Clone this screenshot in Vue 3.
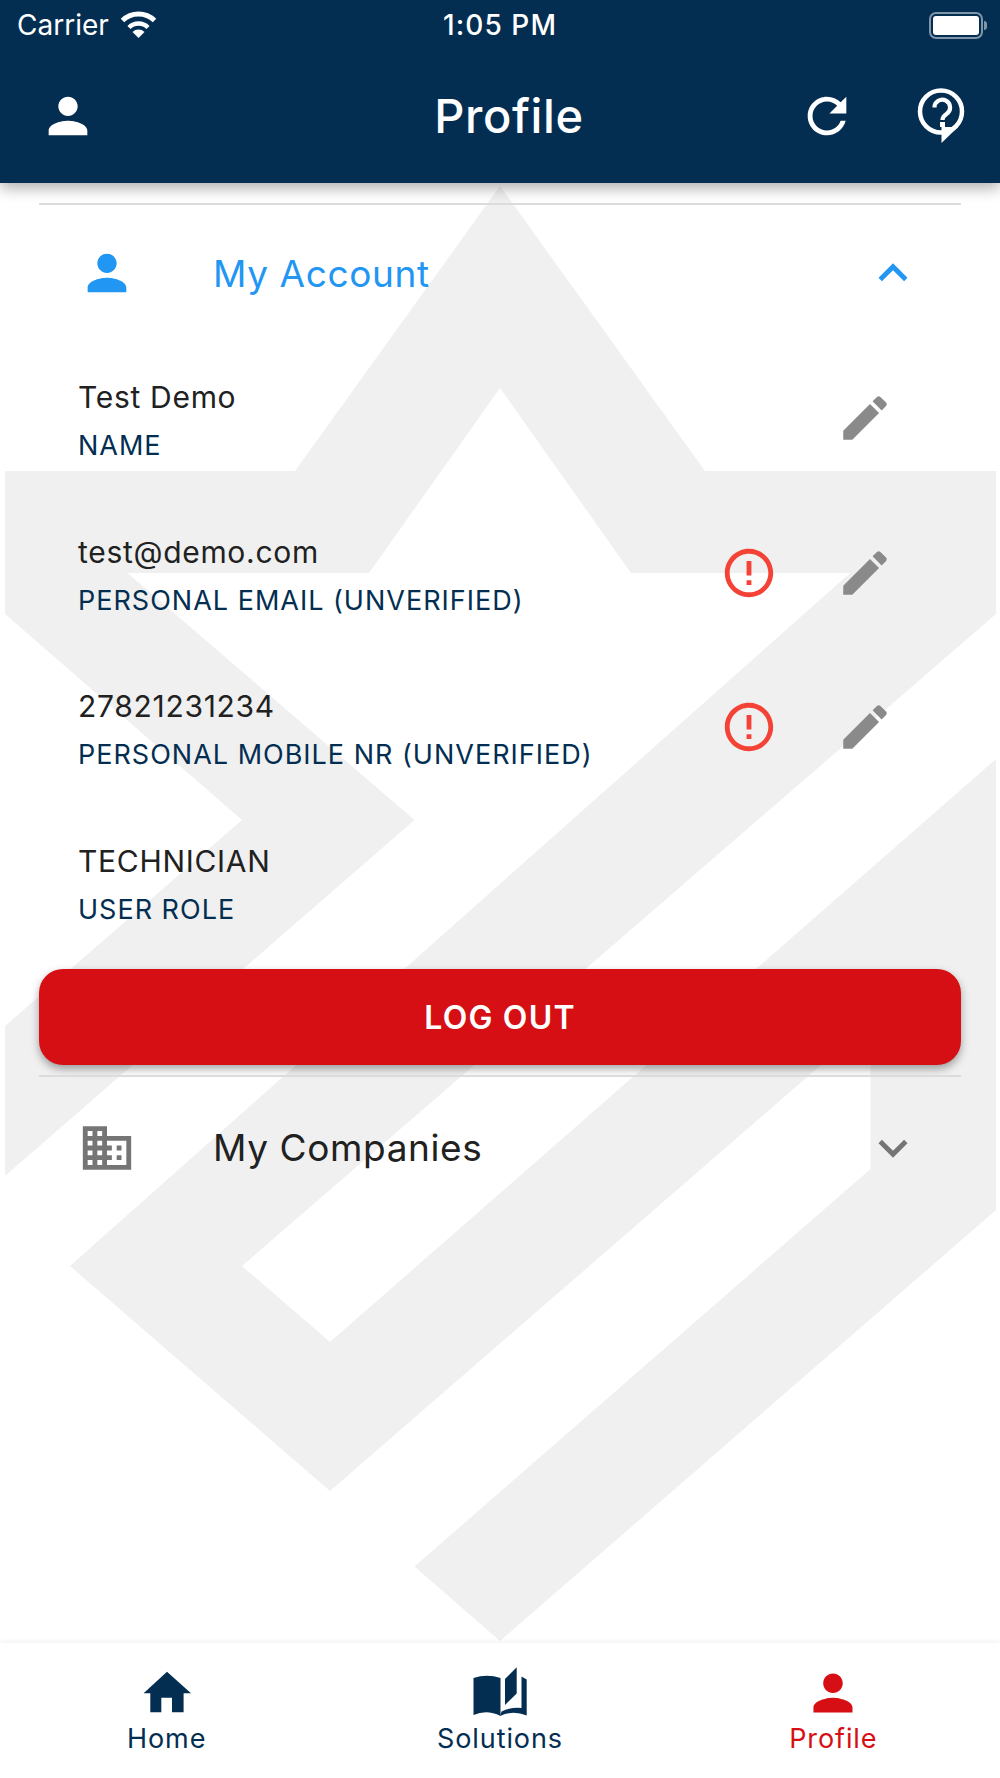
<script setup>
const personPath = 'M12 12c2.21 0 4-1.79 4-4s-1.79-4-4-4-4 1.79-4 4 1.79 4 4 4zm0 2c-2.67 0-8 1.34-8 4v2h16v-2c0-2.66-5.33-4-8-4z'
const editPath = 'M3 17.25V21h3.75L17.81 9.94l-3.75-3.75L3 17.25zM20.71 7.04c.39-.39.39-1.02 0-1.41l-2.34-2.34c-.39-.39-1.02-.39-1.41 0l-1.83 1.83 3.75 3.75 1.83-1.83z'
const errorPath = 'M11 15h2v2h-2zm0-8h2v6h-2zm.99-5C6.47 2 2 6.48 2 12s4.47 10 9.99 10C17.52 22 22 17.52 22 12S17.52 2 11.99 2zM12 20c-4.42 0-8-3.58-8-8s3.58-8 8-8 8 3.58 8 8-3.58 8-8 8z'
const rows = [
  { value: 'Test Demo', label: 'NAME', edit: true, warn: false },
  { value: 'test@demo.com', label: 'PERSONAL EMAIL (UNVERIFIED)', edit: true, warn: true },
  { value: '27821231234', label: 'PERSONAL MOBILE NR (UNVERIFIED)', edit: true, warn: true },
  { value: 'TECHNICIAN', label: 'USER ROLE', edit: false, warn: false }
]
</script>

<template>
  <div class="screen">
    <svg class="watermark" viewBox="0 0 1000 1778" width="1000" height="1778" aria-hidden="true">
      <path d="M500 186 705 471H996V614L242 1266 330 1342 996 759V1210L500 1641 414.500 1566.500 870.500 1169V1022L330 1491 70 1266 850 573H631L500 388 369 573H127.500L414.500 820 5 1176V1026L242 820 5 614V471H295Z" />
    </svg>

    <header class="app-header">
      <div class="status-bar">
        <div class="status-left">
          <span>Carrier</span>
          <svg class="wifi" viewBox="0 0 37 27" width="37" height="27">
            <path d="M2.500 9.500A23 23 0 0 1 34.500 9.500" fill="none" stroke="#fff" stroke-width="5" />
            <path d="M9 16.500A13.500 13.500 0 0 1 28 16.500" fill="none" stroke="#fff" stroke-width="4.500" />
            <path d="M18.500 27 12.500 21A8.500 8.500 0 0 1 24.500 21Z" fill="#fff" />
          </svg>
        </div>
        <span class="clock">1:05 PM</span>
        <div class="battery">
          <div class="battery-body"><div class="battery-level"></div></div>
          <div class="battery-tip"></div>
        </div>
      </div>
      <nav class="nav-bar">
        <div class="nav-left">
          <svg class="icon" viewBox="0 0 24 24"><path :d="personPath" fill="#fff" /></svg>
        </div>
        <h1 class="title">Profile</h1>
        <div class="nav-right">
          <svg class="icon" viewBox="0 0 24 24"><path d="M17.65 6.350C16.200 4.900 14.210 4 12 4c-4.420 0-7.990 3.580-7.990 8s3.570 8 7.990 8c3.730 0 6.840-2.550 7.730-6h-2.080c-.82 2.330-3.040 4-5.650 4-3.310 0-6-2.690-6-6s2.690-6 6-6c1.660 0 3.140.69 4.220 1.780L13 11h7V4l-2.350 2.350z" fill="#fff" /></svg>
          <svg class="icon" viewBox="0 0 58 58">
            <circle cx="29" cy="24.500" r="21" fill="none" stroke="#fff" stroke-width="4.500" />
            <path d="M29.500 40V56L46 40Z" fill="#fff" />
            <path d="M22.500 20.500A7.800 7.800 0 1 1 34.500 27C31.500 29 30.500 30 30.500 33" fill="none" stroke="#fff" stroke-width="4.200" />
            <rect x="28" y="35" width="5" height="5" fill="#fff" />
          </svg>
        </div>
      </nav>
    </header>

    <main class="content">
      <div class="divider"></div>
      <section class="section-head active">
        <svg class="icon" viewBox="0 0 24 24"><path :d="personPath" /></svg>
        <span class="section-title">My Account</span>
        <svg class="icon" viewBox="0 0 24 24"><path d="M12 8l-6 6 1.410 1.410L12 10.830l4.590 4.580L18 14z" /></svg>
      </section>

      <div v-for="row in rows" :key="row.label" class="row">
        <div class="row-text">
          <div class="row-value">{{ row.value }}</div>
          <div class="row-label">{{ row.label }}</div>
        </div>
        <div class="row-icons">
          <svg v-if="row.warn" class="icon" viewBox="0 0 24 24"><path :d="errorPath" fill="#f44336" /></svg>
          <svg v-if="row.edit" class="icon" viewBox="0 0 24 24"><path :d="editPath" fill="#8a8a8a" /></svg>
        </div>
      </div>

      <button class="logout">LOG OUT</button>
      <div class="divider"></div>

      <section class="section-head companies">
        <svg class="icon" viewBox="0 0 24 24"><path d="M12 7V3H2v18h20V7H12zM6 19H4v-2h2v2zm0-4H4v-2h2v2zm0-4H4V9h2v2zm0-4H4V5h2v2zm4 12H8v-2h2v2zm0-4H8v-2h2v2zm0-4H8V9h2v2zm0-4H8V5h2v2zm10 12h-8v-2h2v-2h-2v-2h2v-2h-2V9h8v10zm-2-8h-2v2h2v-2zm0 4h-2v2h2v-2z" /></svg>
        <span class="section-title">My Companies</span>
        <svg class="icon" viewBox="0 0 24 24"><path d="M16.590 8.590L12 13.170 7.410 8.590 6 10l6 6 6-6z" /></svg>
      </section>
    </main>

    <footer class="tab-bar">
      <div class="tab">
        <svg class="tab-icon" viewBox="-13.300 0 100 70">
          <path d="M36.700 16.700 60.700 38.300H53.300V57.300H41.700V42.700H31V57.300H20V38.300H13.300Z" />
        </svg>
        <span>Home</span>
      </div>
      <div class="tab">
        <svg class="tab-icon" viewBox="0 0 100 70">
          <path d="M23.500 23Q37 18.500 50.500 23V61Q37 54 23.500 60Z" />
          <path d="M55 24 66.700 12.300V38.500L55 50Z" />
          <path d="M71.500 21.500 76.700 24.500V60.500Q63 55 50 61L51.500 56.500Q61 52 71.500 53Z" />
        </svg>
        <span>Solutions</span>
      </div>
      <div class="tab tab-active">
        <svg class="tab-icon" viewBox="0 0 100 70">
          <path :d="personPath" transform="translate(20.700 8.700) scale(2.440)" />
        </svg>
        <span>Profile</span>
      </div>
    </footer>
  </div>
</template>

<style scoped>
.screen {
  position: relative;
  width: 1000px;
  height: 1778px;
  display: flex;
  flex-direction: column;
  overflow: hidden;
  background: #fff;
  font-family: Inter, "Liberation Sans", sans-serif;
}
.watermark {
  position: absolute;
  left: 0;
  top: 0;
  fill: #f0f0f0;
}
.icon {
  width: 58px;
  height: 58px;
  flex: none;
  display: block;
}
.app-header {
  position: relative;
  z-index: 2;
  height: 183px;
  flex: none;
  background: #032e52;
  color: #fff;
  box-shadow: 0 5px 14px rgba(0, 0, 0, 0.32);
}
.status-bar {
  height: 50px;
  display: grid;
  grid-template-columns: 1fr auto 1fr;
  align-items: center;
  padding: 0 15px;
  font-size: 28px;
}
.status-left {
  display: flex;
  align-items: center;
  gap: 11px;
  padding-left: 2px;
}
.wifi {
  margin-top: -1px;
}
.clock {
  font-weight: 500;
  letter-spacing: 1.1px;
}
.battery {
  justify-self: end;
  display: flex;
  align-items: center;
  margin-top: 1px;
  margin-right: -2px;
}
.battery-body {
  width: 54px;
  height: 27px;
  box-sizing: border-box;
  border: 2px solid #7f95a8;
  border-radius: 7px;
  padding: 2px;
}
.battery-level {
  height: 100%;
  background: #fff;
  border-radius: 3px;
}
.battery-tip {
  width: 3px;
  height: 9px;
  margin-left: 1px;
  background: #7f95a8;
  border-radius: 0 3px 3px 0;
}
.nav-bar {
  height: 131px;
  display: grid;
  grid-template-columns: 1fr auto 1fr;
  align-items: center;
  padding: 0 21px 0 39px;
}
.title {
  margin: 0;
  font-size: 47px;
  font-weight: 500;
  letter-spacing: 0.6px;
}
.nav-right {
  display: flex;
  justify-content: flex-end;
  gap: 56px;
  padding-right: 9px;
}
.content {
  position: relative;
  z-index: 1;
  flex: 1;
  padding: 20px 39px 0;
}
.divider {
  height: 2px;
  background: #dcdcdc;
}
.section-head {
  display: flex;
  align-items: center;
  height: 139px;
  padding: 0 39px 0 39px;
  box-sizing: border-box;
  fill: #757575;
  color: #212121;
}
.section-head.active {
  padding-bottom: 3px;
  fill: #2196f3;
  color: #2196f3;
}
.section-head.companies {
  height: 141px;
}
.section-title {
  flex: 1;
  margin-left: 77px;
  font-size: 37px;
  letter-spacing: 0.6px;
}
.row {
  height: 154.500px;
  display: flex;
  justify-content: space-between;
  padding: 0 67px 0 39px;
}
.row-text {
  padding-top: 35px;
}
.row-value {
  font-size: 30px;
  line-height: 36px;
  letter-spacing: 0.7px;
  color: #212121;
}
.row-label {
  margin-top: 14px;
  font-size: 27px;
  line-height: 34px;
  letter-spacing: 1px;
  color: #032e52;
}
.row-icons {
  display: flex;
  gap: 58px;
  padding-top: 45px;
}
.logout {
  display: block;
  width: 100%;
  height: 96px;
  margin: 7px 0 10px;
  border: 0;
  border-radius: 24px;
  background: #d50f13;
  color: #fff;
  font-family: inherit;
  font-size: 32px;
  font-weight: 600;
  letter-spacing: 1.2px;
  box-shadow: 0 4px 8px rgba(0, 0, 0, 0.35);
}
.tab-bar {
  position: relative;
  z-index: 2;
  height: 135px;
  flex: none;
  display: grid;
  grid-template-columns: repeat(3, 1fr);
  padding-top: 12px;
  box-sizing: border-box;
  background: #fff;
  box-shadow: 0 -2px 4px rgba(0, 0, 0, 0.05);
}
.tab {
  display: flex;
  flex-direction: column;
  align-items: center;
  color: #032e52;
  fill: #032e52;
  font-size: 27px;
  line-height: 28px;
  letter-spacing: 0.9px;
}
.tab-active {
  color: #d50f13;
  fill: #d50f13;
}
.tab-icon {
  width: 100px;
  height: 70px;
  display: block;
}
</style>
